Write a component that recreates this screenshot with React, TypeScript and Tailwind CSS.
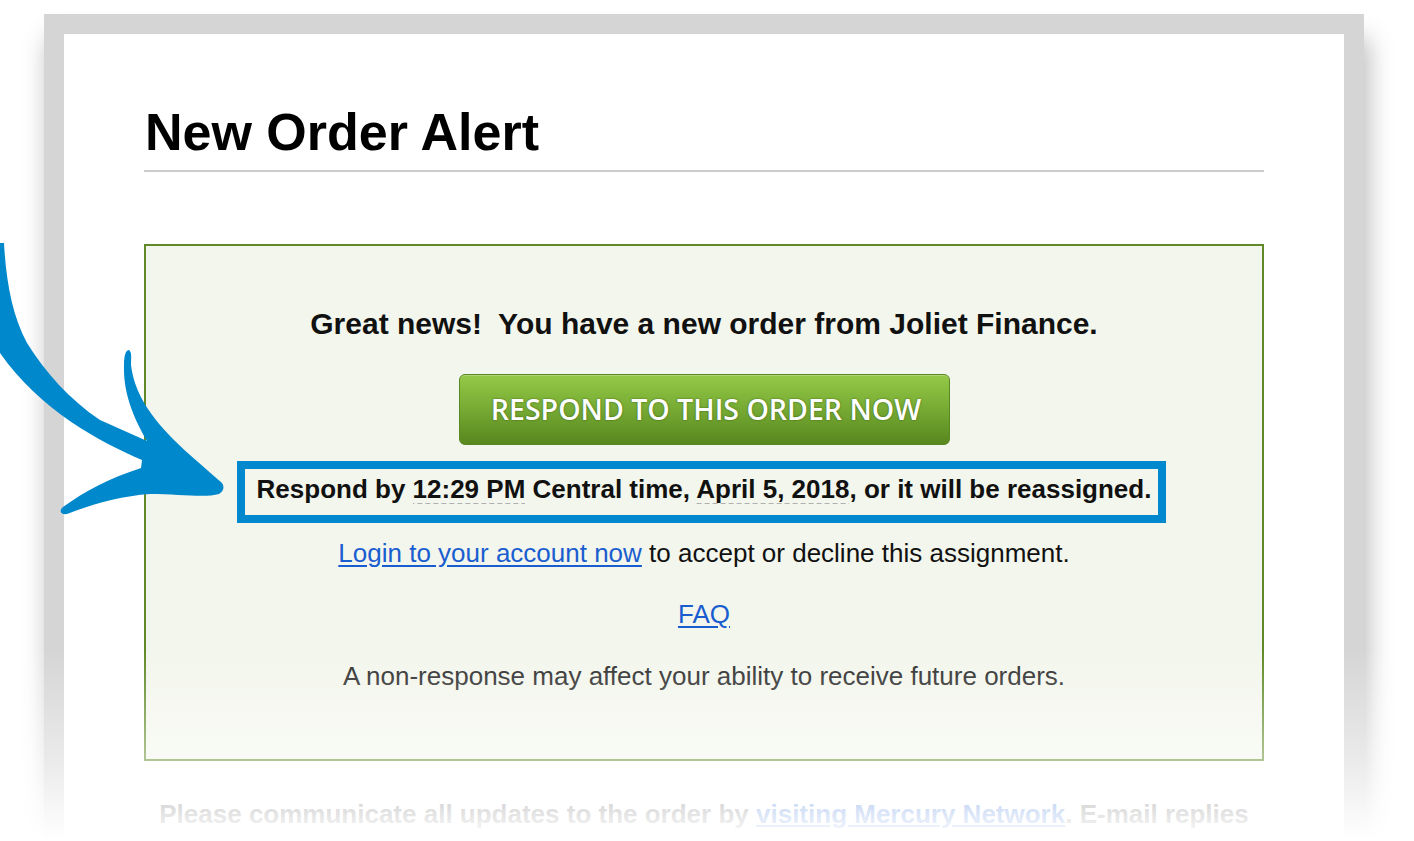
import React from 'react';

const sans = { fontFamily: '"Liberation Sans", Arial, Helvetica, sans-serif' };

function CurvedArrow() {
  return (
    <svg
      className="absolute left-0 top-0 pointer-events-none"
      width="240"
      height="530"
      viewBox="0 0 240 530"
    >
      <path
        fill="#0088cc"
        d="M 0 243 L 4 243
           C 6 280, 12 315, 27 343
           C 45 372, 70 400, 100 420
           L 147 441
           C 135 420, 123 395, 124 365
           C 124 355, 126 350, 129 350
           C 132 352, 131 358, 131 365
           C 135 400, 160 428, 190 455
           C 205 468, 215 477, 221 482
           C 225 486, 224 491, 219 494
           C 205 498, 180 494, 150 494
           C 120 496, 90 505, 67 514
           C 60 515, 59 510, 63 507
           C 85 491, 110 478, 141 468
           L 142 460
           C 100 442, 40 410, 0 353 Z"
      />
    </svg>
  );
}

// dashed gray underline like an <abbr> / date-time marker
function Dashed({ children }: { children: React.ReactNode }) {
  return (
    <span className="bg-[linear-gradient(to_right,#b0b0b0_65%,transparent_0)] bg-[length:8px_1px] bg-repeat-x bg-bottom">
      {children}
    </span>
  );
}

export default function App() {
  return (
    <div className="relative w-[1414px] h-[841px] overflow-hidden bg-white" style={sans}>
      <div className="pt-[14px] pl-[44px]">
        {/* Card frame */}
        <div className="w-[1320px] min-h-[900px] border-[20px] border-[#d5d5d5] bg-white shadow-[4px_24px_24px_rgba(0,0,0,0.28)]">
          <div className="pt-[72px] px-[80px]">
            {/* Header */}
            <div className="border-b-2 border-[#cccccc] pb-[12px]">
              <h1 className="text-[52px] leading-none font-bold text-black pl-px">New Order Alert</h1>
            </div>

            {/* Alert box */}
            <div className="mt-[72px] border-2 border-[#5f8a27] bg-[#f3f6ec] pt-[60px] pb-[68px] text-center">
              <p className="text-[30px] leading-[36px] font-bold text-[#111]">
                Great news!&nbsp; You have a new order from Joliet Finance.
              </p>

              <div className="mt-[32px] flex justify-center">
                <a
                  href="#"
                  className="flex h-[71px] w-[491px] items-center justify-center rounded-[6px] border border-[#5a8624] bg-gradient-to-b from-[#95c947] via-[#76aa33] to-[#58871f] shadow-[inset_0_1px_0_rgba(255,255,255,0.25)]"
                >
                  <span
                    className="pl-[4px] text-[28.5px] leading-none font-semibold text-white [text-shadow:0_0_2px_rgba(30,60,5,0.7)]"
                    style={{ fontFamily: '"Open Sans", sans-serif' }}
                  >
                    RESPOND TO THIS ORDER NOW
                  </span>
                </a>
              </div>

              <div className="mt-[16px] ml-[91px] w-[929px] border-[8px] border-[#0088cf] pb-[6px] pl-[5px]">
                <p className="text-[26px] leading-[40px] font-bold text-[#111] whitespace-nowrap">
                  Respond by <Dashed>12:29 PM</Dashed> Central time, <Dashed>April 5, 2018</Dashed>, or it will be reassigned.
                </p>
              </div>

              <p className="mt-[15px] text-[26px] leading-[30px] text-[#111]">
                <a href="#" className="text-[#1a5dd0] underline underline-offset-[3px]">Login to your account now</a> to accept or decline this assignment.
              </p>

              <p className="mt-[31px] text-[26px] leading-[30px]">
                <a href="#" className="text-[#1a5dd0] underline underline-offset-[3px]">FAQ</a>
              </p>

              <p className="mt-[32px] text-[26px] leading-[30px] text-[#2a2a2a]">
                A non-response may affect your ability to receive future orders.
              </p>
            </div>

            {/* Footer note */}
            <p className="mt-[38px] text-center text-[26px] leading-[30px] font-bold text-[#555] whitespace-nowrap">
              Please communicate all updates to the order by{' '}
              <a href="#" className="text-[#1a5dd0] underline">visiting Mercury Network</a>. E-mail replies
            </p>
          </div>
        </div>
      </div>

      {/* Bottom fade */}
      <div className="pointer-events-none absolute inset-x-0 bottom-0 h-[241px] bg-[linear-gradient(to_bottom,rgba(255,255,255,0)_20%,rgba(255,255,255,0.5)_66%,rgba(255,255,255,0.86)_90%,#fff_100%)]" />

      <CurvedArrow />
    </div>
  );
}
